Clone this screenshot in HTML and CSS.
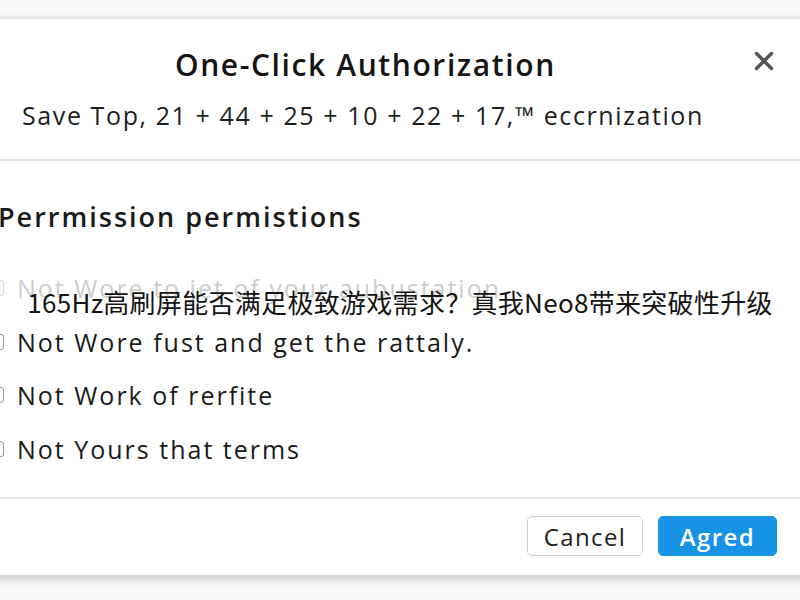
FILE: index.html
```html
<!DOCTYPE html>
<html lang="en">
<head>
<meta charset="utf-8">
<title>One-Click Authorization</title>
<link rel="stylesheet" href="styles.css">
</head>
<body>
<div class="dialog">
  <div class="header">
    <div class="title-row">
      <h1 class="title">One-Click Authorization</h1>
      <button class="close" aria-label="Close">
        <svg width="22" height="22" viewBox="0 0 22 22"><path d="M3.5 3.5 L18.5 18.5 M18.5 3.5 L3.5 18.5" stroke="#555" stroke-width="3.4" stroke-linecap="round"/></svg>
      </button>
    </div>
    <p class="subtitle">Save Top, 21 + 44 + 25 + 10 + 22 + 17,™ eccrnization</p>
  </div>
  <div class="body">
    <h2 class="section-title">Perrmission permistions</h2>
    <ul class="items">
      <li class="item faded"><span class="box"></span>Not Wore to jet of your aubustation</li>
      <li class="item"><span class="box"></span>Not Wore fust and get the rattaly.</li>
      <li class="item"><span class="box"></span>Not Work of rerfite</li>
      <li class="item"><span class="box"></span>Not Yours that terms</li>
    </ul>
  </div>
  <div class="footer">
    <button class="btn btn-cancel">Cancel</button>
    <button class="btn btn-primary">Agred</button>
  </div>
</div>
<div class="caption">165Hz高刷屏能否满足极致游戏需求？真我Neo8带来突破性升级</div>
</body>
</html>
```

FILE: styles.css
```css
html, body {
  margin: 0;
  padding: 0;
}
body {
  width: 800px;
  height: 600px;
  overflow: hidden;
  background: #f7f7f7;
  font-family: "Open Sans", "Noto Sans", sans-serif;
  color: #1c1c1c;
  position: relative;
}
.dialog {
  margin: 17px -20px 0 -20px;
  background: #fff;
  border-top: 2px solid #e6e6e6;
  border-bottom: 1px solid #cfcfcf;
  box-shadow: 0 3px 8px rgba(0,0,0,0.18);
  display: flex;
  flex-direction: column;
}
.header {
  height: 142px;
  border-bottom: 2px solid #e4e4e4;
  box-sizing: border-box;
  padding: 26px 0 0 42px;
}
.title-row {
  display: flex;
  align-items: center;
}
.title {
  margin: 0 0 0 153px;
  font-size: 30px;
  letter-spacing: 1.6px;
  font-weight: 600;
  line-height: 40px;
  color: #151515;
  flex: 1;
}
.close {
  border: 0;
  background: none;
  padding: 0;
  margin: -8px 45px 0 0;
  width: 22px;
  height: 22px;
  cursor: pointer;
}
.close svg { display: block; }
.subtitle {
  margin: 14px 0 0 0;
  font-size: 25px;
  letter-spacing: 1.6px;
  line-height: 32px;
  color: #1e1e1e;
}
.body {
  height: 336px;
  box-sizing: border-box;
  padding: 38px 0 0 10px;
}
.section-title {
  margin: 0 0 0 8px;
  font-size: 27px;
  letter-spacing: 2px;
  font-weight: 600;
  line-height: 36px;
  color: #1a1a1a;
}
.items {
  list-style: none;
  margin: 37px 0 0 0;
  padding: 0;
  display: flex;
  flex-direction: column;
  gap: 21.5px;
}
.item {
  display: flex;
  align-items: center;
  gap: 13px;
  font-size: 25px;
  letter-spacing: 2px;
  line-height: 32px;
  color: #1a1a1a;
}
.item.faded { color: #cdcdcd; }
.box {
  width: 12px;
  height: 14px;
  border: 1px solid #999;
  border-radius: 3px;
  flex: none;
}
.item.faded .box { border-color: #ddd; }
.footer {
  border-top: 2px solid #e6e6e6;
  height: 78px;
  box-sizing: border-box;
  display: flex;
  justify-content: flex-end;
  align-items: flex-start;
  gap: 15px;
  padding: 17px 43px 0 0;
}
.btn {
  height: 40px;
  border-radius: 5px;
  font-family: "Open Sans", "Noto Sans", sans-serif;
  font-size: 24px;
  letter-spacing: 1.4px;
  padding: 0;
  cursor: pointer;
}
.btn-cancel {
  width: 116px;
  background: #fff;
  border: 1px solid #cfcfcf;
  color: #222;
}
.btn-primary {
  width: 119px;
  background: #1793e6;
  border: 1px solid #1793e6;
  color: #fff;
  font-weight: 600;
}
.caption {
  position: absolute;
  left: 0;
  right: 0;
  top: 285px;
  text-align: center;
  font-family: "Noto Sans CJK SC", "Noto Sans", sans-serif;
  font-size: 26px;
  line-height: 34px;
  color: #141414;
  letter-spacing: 0.3px;
}
```
